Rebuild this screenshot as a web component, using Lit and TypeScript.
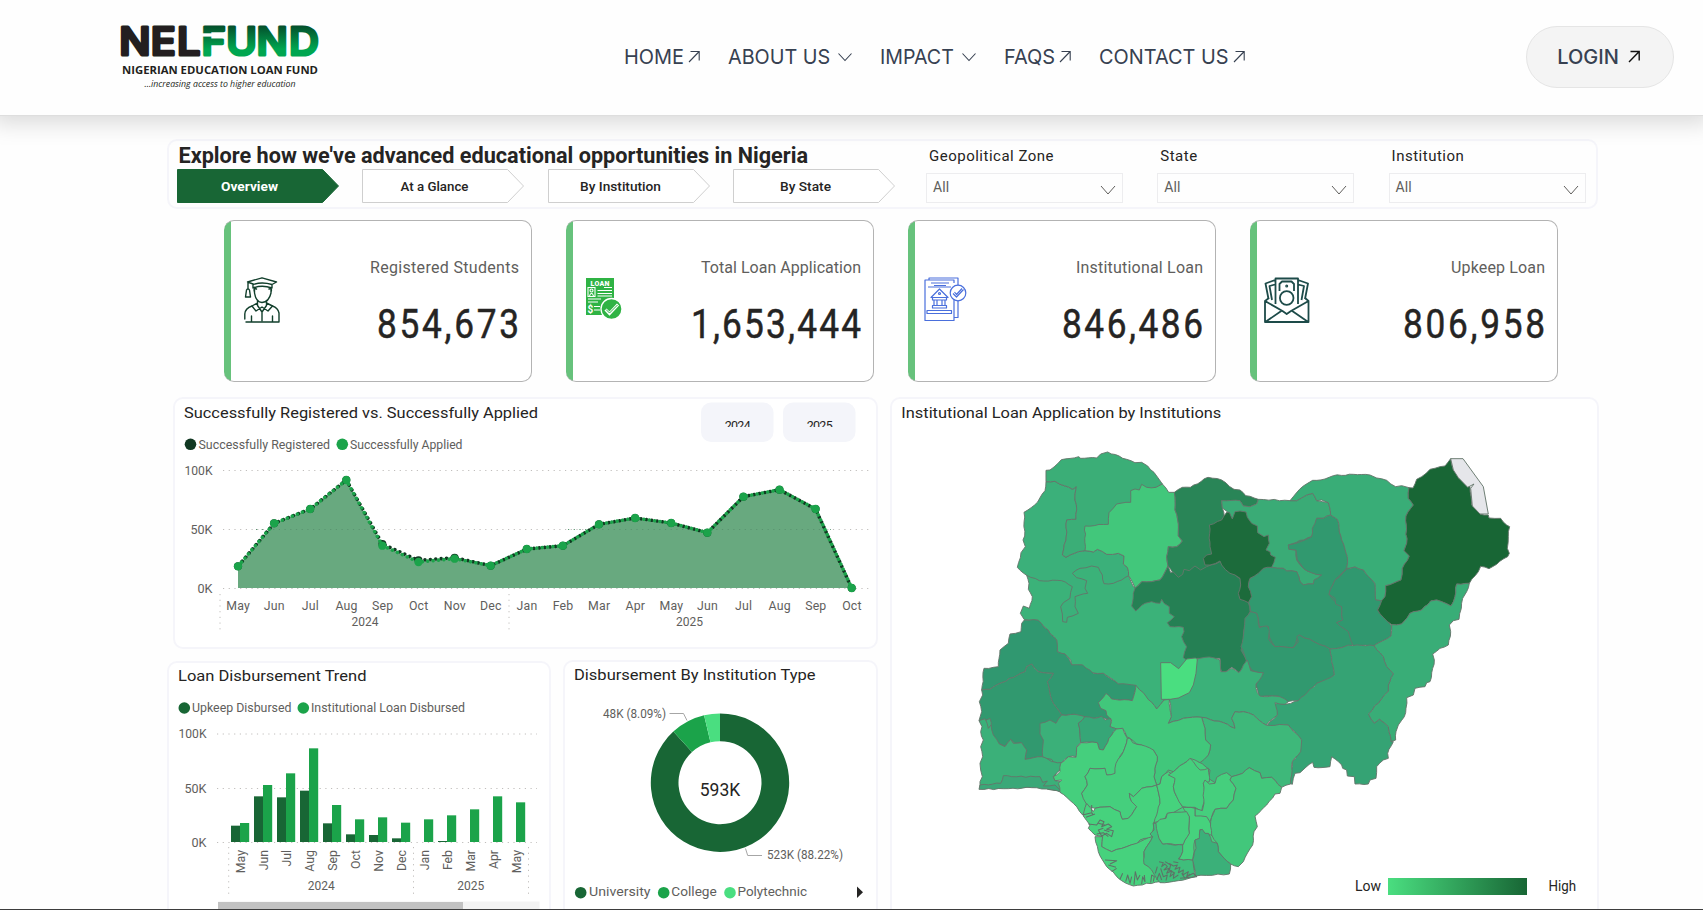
import { LitElement, html, svg, css } from "lit";
import { customElement } from "lit/decorators.js";

type Pt = [number, number];
const MONTHS = ["Jan", "Feb", "Mar", "Apr", "May", "Jun", "Jul", "Aug", "Sep", "Oct", "Nov", "Dec"];

/* Text fitted to a known advance width. */
const label = (x: number, y: number, s: string, size: number, len: number, cls = "soft", anchor = "start") =>
  svg`<text class=${cls} x=${x} y=${y} font-size=${size} textLength=${len} lengthAdjust="spacingAndGlyphs" text-anchor=${anchor}>${s}</text>`;

const arrow = svg`<path d="M1 12 L11.200 1.500 M2.500 1.500 H11.200 V10.500" />`;
const chevron = svg`<path d="M.5 3.500 L7 10.500 L13.500 3.500" />`;

@customElement("site-header")
export class SiteHeader extends LitElement {
  static styles = css`
    :host { display: block; }
    .bar { display: flex; align-items: center; height: 115px; box-sizing: border-box; padding: 0 29px 0 120px;
      background: #fefefe; box-shadow: 0 1px 0 #dedede, 0 0 22px 8px rgba(0, 0, 0, .15); position: relative; z-index: 2; }
    .logo { display: block; width: 201px; height: 72px; overflow: visible; }
    .nav { display: flex; align-items: center; margin-left: 303px; font: 400 20px/24px Inter, sans-serif; color: #374151; height: 24px; margin-bottom: 2px; }
    .item { display: flex; align-items: center; margin-right: 28px; }
    .txt { display: block; white-space: nowrap; overflow: visible; }
    .glyph { display: block; fill: none; stroke: #374151; stroke-width: 1.1; margin-left: 4px; }
    .glyph.down { margin-left: 8px; }
    .login { margin-left: auto; margin-bottom: 2px; display: flex; align-items: center; justify-content: center; gap: 9px; box-sizing: border-box;
      width: 148px; height: 62px; border: 1px solid #e5e5e5; border-radius: 31px; background: #f4f4f4; padding-right: 3px;
      font: 500 20px/24px Inter, sans-serif; color: #374151; }
    .login .glyph { stroke: #111; stroke-width: 1.4; margin: 0; }
  `;
  render() {
    const items: [string, boolean, number][] = [["HOME", false, 60], ["ABOUT US", true, 102.3], ["IMPACT", true, 73.8], ["FAQS", false, 51.1], ["CONTACT US", false, 129.5]];
    return html`<header class="bar">
      <svg class="logo" viewBox="120 22 201 72" font-family="Inter, sans-serif">
        <defs><linearGradient id="g" x1="0" y1="26" x2="0" y2="57" gradientUnits="userSpaceOnUse">
          <stop offset="0" stop-color="#04502c" /><stop offset=".75" stop-color="#00a650" /></linearGradient></defs>
        <g font-size="38.5" font-weight="500" stroke-width="3.2" stroke-linejoin="round" transform="scale(1.075 1)">
          <text x="110.900 140.200 164.600" y="55.400" fill="#231f20" stroke="#231f20">NEL</text>
          <text x="187.500 210.400 238.600 268.900" y="55.400" fill="url(#g)" stroke="url(#g)">FUND</text>
        </g>
        <rect x="201.500" y="33.300" width="10.500" height="3.300" fill="#fefefe" />
        <text x="122" y="74" font-family="Open Sans" font-size="11.3" font-weight="700" fill="#231f20" textLength="196" lengthAdjust="spacingAndGlyphs">NIGERIAN EDUCATION LOAN FUND</text>
        <text x="144.5" y="86.8" font-family="Open Sans" font-size="8.6" font-style="italic" font-weight="500" fill="#231f20" textLength="151" lengthAdjust="spacingAndGlyphs">...increasing access to higher education</text>
      </svg>
      <nav class="nav">${items.map(([t, down, w]) => html`<span class="item">
        <svg class="txt" width=${w} height="24"><text y="19" fill="#374151" textLength=${w} lengthAdjust="spacingAndGlyphs">${t}</text></svg>
        ${down ? html`<svg class="glyph down" width="14" height="14">${chevron}</svg>` : html`<svg class="glyph" width="12" height="13">${arrow}</svg>`}
      </span>`)}</nav>
      <div class="login"><span>LOGIN</span><svg class="glyph" width="12" height="13">${arrow}</svg></div>
    </header>`;
  }
}

@customElement("filter-panel")
export class FilterPanel extends LitElement {
  static styles = css`
    :host { display: flex; box-sizing: border-box; width: 1431px; height: 70px; border: 2px solid #f5f5fa; border-radius: 10px;
      font-family: Roboto, sans-serif; color: #252423; }
    .left { width: 746px; padding-left: 8px; box-sizing: border-box; }
    .title { display: block; height: 28px; overflow: visible; }
    .title text { font: 700 22px Roboto, sans-serif; fill: #252423; }
    .tabs { display: flex; gap: 23.3px; }
    .tab { display: block; width: 162px; height: 35px; }
    .tab path { fill: #fff; stroke: #cfcfcf; }
    .tab.on path { fill: #186635; stroke: #186635; }
    .tab text { font: 500 13px Roboto, sans-serif; fill: #252423; text-anchor: middle; }
    .tab.on text { font-weight: 700; fill: #fff; }
    .filters { display: flex; gap: 34.3px; margin-left: 11px; }
    .filter { width: 197px; }
    .name { height: 32px; padding: 7px 0 0 3px; box-sizing: border-box; font-size: 15px; line-height: 17px; letter-spacing: .5px; }
    .box { display: flex; align-items: center; justify-content: space-between; height: 30px; box-sizing: border-box; border: 1.5px solid #ededef;
      padding: 0 6px 2px; font-size: 14px; letter-spacing: .1px; color: #605e5c; }
    .box svg { fill: none; stroke: #605e5c; margin-top: 6px; }
  `;
  render() {
    const tabs: [string, number][] = [["Overview", 57], ["At a Glance", 68], ["By Institution", 81], ["By State", 51]];
    return html`<div class="left">
      <svg class="title" width="640" height="28"><text x="1.5" y="21.500" textLength="629.500" lengthAdjust="spacingAndGlyphs">Explore how we've advanced educational opportunities in Nigeria</text></svg>
      <div class="tabs">${tabs.map(([t, w], i) => html`<svg class="tab ${i ? "" : "on"}" viewBox="0 0 162 35">
        <path d="M.5 .5 H145.5 L161.5 17 L145.5 33.5 H.5 Z" /><text x="72.5" y="22" textLength=${w} lengthAdjust="spacingAndGlyphs">${t}</text></svg>`)}</div>
    </div>
    <div class="filters">${["Geopolitical Zone", "State", "Institution"].map(t => html`<div class="filter">
      <div class="name">${t}</div><div class="box">All<svg width="16" height="12"><path d="M1 2 L8 10 L15 2" /></svg></div></div>`)}</div>`;
  }
}

const ICONS = {
  student: svg`<g fill="none" stroke="#123f2c" stroke-width="1.4" stroke-linejoin="round" stroke-linecap="round">
    <path d="M3.5 5 L18 .8 L32.5 5 L28 7.5 V11 Q18 7.5 9 11 V7 Z M4 5.5 V12 M9 7.5 Q18 4.5 28 7.5 M2.5 13 L1.5 20 H6.5 L5.5 13 Q4 10.500 2.500 13"/>
    <path d="M10.500 10.500 V16 Q12 25 18 25.500 Q25 25 27 16 V10.500 M10.500 15 Q9 11 12.500 12 M27 15 Q28.500 11 25 12 M13.500 24 V28.500 L18 35 L22.500 28.500 V24 M13.500 26 L8 29 L12 34 L18 30 L24 34 L28.500 29 L22.500 26 M18 35 V44"/>
    <path d="M8 29 Q1 31.500 .8 37 V42 M2 45 H35 V36 Q34 31 28.500 29 M7.500 39 V45 M28.500 39 V45"/></g>`,
  loan: svg`<g><path d="M0 0 H28 V37 H0 Z" fill="#2fb344"/>
    <text x="14" y="7.500" font-family="Roboto, sans-serif" font-weight="900" font-size="7" fill="#fff" text-anchor="middle" textLength="19">LOAN</text>
    <g fill="none" stroke="#fff" stroke-width="1.1"><path d="M2 9.500 H9 V18.500 H2 Z M3.500 18 Q5.500 12.500 7.500 18 M11.500 12.500 H26 M18 9.500 H26 M11.500 15.500 H26 M11.500 18 H26 M2 21 H15 M2 24 H12 M8 28.500 H14 M8 32 H14"/><circle cx="5.500" cy="12.500" r="1.500"/></g>
    <text x="1.500" y="35" font-family="Roboto, sans-serif" font-weight="700" font-size="10" fill="#fff">$</text>
    <circle cx="25.500" cy="31" r="10.500" fill="#2fb344" stroke="#fff" stroke-width="1.300"/>
    <path d="M19.500 31.500 L23.500 35.500 L32 26.500" fill="none" stroke="#fff" stroke-width="3"/><path d="M20 31.500 L23.500 35 L31.500 27" fill="none" stroke="#2fb344" stroke-width="1"/></g>`,
  bank: svg`<g fill="none" stroke="#4a6fdc" stroke-width="1.2" stroke-linejoin="round">
    <path d="M5 3 V1 H34 V8 M30 6 V3 H1 V43.500 H30 V20 M34 22 V40.500 H30 M34 10 V8 M7 6 H25 M10 8.500 H22 M4 10 H27"/>
    <path d="M7 20.500 L15.500 12 L24 20.500 Z M8.500 20.500 H22.500 V23 H8.500 Z M10 23 V28.500 M13 23 V28.500 M18 23 V28.500 M21 23 V28.500 M8.500 28.500 H22.500 V31 H8.500 Z M3 33.500 H27.500 V36.500 H3 Z"/>
    <circle cx="15.500" cy="16.500" r="1"/><circle cx="34" cy="16" r="7.800" fill="#fff"/><path d="M29 16.500 L32.500 20 L39.500 12.500 M30.500 15 L32.500 17.500 L38 11.500"/></g>`,
  envelope: svg`<g fill="none" stroke="#1d4b49" stroke-width="1.8" stroke-linejoin="round">
    <path d="M4.500 22 L1.500 6.500 L11 3 M8 23 L5.500 9 L11 7.500 M41 22 L44 6.500 L34 3 M37.500 23 L40 9 L34 7.500 M11.500 27 V1.500 H34 V27 M15.500 14 V7 L18 4.500 H27.500 L30 7 V14"/>
    <circle cx="22.700" cy="21" r="6.800"/><circle cx="22.700" cy="9" r=".6"/>
    <path d="M5 21 L1 24 V45 H44.500 V24 L41 21 M1 24 L18.500 34 L22.700 37 L27 34 L44.500 24 M18 33.500 L2 44.500 M27.500 33.500 L43.500 44.500"/></g>`,
};

@customElement("stat-card")
export class StatCard extends LitElement {
  static properties = { name: {}, value: {}, icon: {}, w: { type: Number }, vw: { type: Number } };
  declare name: string; declare value: string; declare icon: keyof typeof ICONS; declare w: number; declare vw: number;
  static styles = css`
    :host { display: block; }
    .card { display: flex; align-items: center; box-sizing: border-box; width: 308px; height: 162px; border: 1px solid #b3b3b3; border-left: 0;
      border-radius: 10px; background: linear-gradient(90deg, #67c27c 7px, #fff 7px); padding: 0 12px 0 17px; }
    .icon { display: block; flex: none; overflow: visible; }
    .icon.student { margin: -3px 0 0 3px; } .icon.loan { margin: -1px 0 0 3.5px; } .icon.bank { margin: -2px 0 0 -.5px; } .icon.envelope { margin: -3px 0 0 -3px; }
    .body { display: flex; flex-direction: column; align-items: flex-end; margin-left: auto; gap: 27.5px; padding-bottom: .5px; }
    text { font-family: Roboto, sans-serif; }
    .n { font-size: 16px; fill: #605e5c; }
    .v { font-size: 41px; fill: #252423; stroke: #252423; stroke-width: .5; transform: scaleX(.86); }
    svg { display: block; overflow: visible; }
  `;
  render() {
    return html`<div class="card"><svg class="icon ${this.icon}" width="44" height="46">${ICONS[this.icon]}</svg>
      <div class="body">
        <svg width=${this.w} height="20"><text class="n" y="16" textLength=${this.w} lengthAdjust="spacing">${this.name}</text></svg>
        <svg width=${this.vw + .5} height="40"><text class="v" y="33" textLength=${(this.vw + 1) / .86} lengthAdjust="spacing">${this.value}</text></svg>
      </div></div>`;
  }
}

const chartCss = css`
  :host { display: block; }
  svg { display: block; }
  text { font-family: Roboto, sans-serif; }
  .head { fill: #252423; } .soft { fill: #605e5c; } .mid { text-anchor: middle; } .end { text-anchor: end; }
  .grid { stroke: #c0bebc; stroke-width: 1; stroke-dasharray: 1.2 4.5; fill: none; }
`;

@customElement("area-chart")
export class AreaChart extends LitElement {
  static styles = [chartCss, css`
    .area { fill: #68a97f; }
    .dots { fill: none; stroke-width: 3.6; stroke-linecap: round; stroke-dasharray: .01 5.4; }
    .btn { fill: #f4f5fa; }
    .over { stroke: #5a9470; }
  `];
  render() {
    const ys = [529, 400, 357, 270, 467, 516, 506, 527, 477, 467, 403, 384, 399, 428, 320, 299, 357, 594];
    const dark = [...ys]; dark[4] = 462; dark[5] = 511; dark[6] = 503;
    const pt = (v: number, i: number): Pt => [238 + i * 36.1, 390 + v / 3];
    const a = ys.map(pt), b = dark.map(pt);
    const d = "M" + a.map(p => p.join(" ")).join("L"), e = "M" + b.map(p => p.join(" ")).join("L");
    return html`<svg width="702" height="248" viewBox="175 399 702 248">
      ${label(184, 418, "Successfully Registered vs. Successfully Applied", 15.5, 354, "head")}
      ${[["2024", 701], ["2025", 783]].map(([t, x]) => svg`<rect class="btn" x=${x} y="402.500" width="72.500" height="39.500" rx="10" />
        <svg x=${x} y="415" width="73" height="12" ><text class="head mid" x="36.700" y="15" font-size="12.500" textLength="26">${t}</text></svg>`)}
      <circle cx="190.500" cy="444.300" r="5.800" fill="#113822" />${label(198.5, 449, "Successfully Registered", 12.5, 131.5)}
      <circle cx="342.300" cy="444.300" r="5.800" fill="#1ba34a" />${label(350, 449, "Successfully Applied", 12.5, 112.5)}
      <path class="grid" d="M223 470.500 H869 M223 529.500 H869 M223 588.500 H869 M220 594 V631 M509 594 V631" />
      ${label(212.5, 475, "100K", 12.5, 28, "soft", "end")}${label(212.5, 534, "50K", 12.5, 22, "soft", "end")}${label(212.5, 593, "0K", 12.5, 15, "soft", "end")}
      <path class="area" d="${d}V588H238Z" />
      <path class="grid over" d="M256 529.500 H370 M568 529.500 H831" />
      <path class="dots" stroke="#113822" d=${e} stroke-dashoffset="-1.200" /><g fill="#113822">${b.map(p => svg`<circle cx=${p[0]} cy=${p[1]} r="4" />`)}</g>
      <path class="dots" stroke="#1ba34a" d=${d} /><g fill="#1ba34a">${a.map(p => svg`<circle cx=${p[0]} cy=${p[1]} r="4.200" />`)}</g>
      ${a.map((p, i) => svg`<text class="soft mid" x=${p[0] + .2} y="610" font-size="12.300" letter-spacing=".2">${MONTHS[(i + 4) % 12]}</text>`)}
      ${label(365, 626, "2024", 12.5, 27, "soft", "middle")}${label(689.5, 626, "2025", 12.5, 27, "soft", "middle")}
    </svg>`;
  }
}

@customElement("bar-chart")
export class BarChart extends LitElement {
  static styles = [chartCss];
  render() {
    const up = [512, 424, 427, 407, 505, 538, 540, 550, 562, 558, 562, 562, 562];
    const inst = [504, 390, 355, 280, 450, 493, 487, 503, 493, 481, 463, 424, 442];
    const bar = (v: number, x: number, c: string) => svg`<rect x=${160 + x / 3} y=${655 + v / 3} width="9.200" height=${Math.max(0, (561 - v) / 3)} fill=${c} />`;
    return html`<svg width="380" height="247" viewBox="169 663 380 247">
      ${label(178, 681, "Loan Disbursement Trend", 15.5, 188.5, "head")}
      <circle cx="184.300" cy="708" r="5.800" fill="#186635" />${label(192, 712.3, "Upkeep Disbursed", 12.5, 99.5)}
      <circle cx="303.300" cy="708" r="5.800" fill="#1ba34a" />${label(311, 712.3, "Institutional Loan Disbursed", 12.5, 154)}
      <path class="grid" d="M217 734 H537 M217 788.500 H537 M217 842.500 H537 M228.700 847 V895 M413.500 847 V895 M528.500 847 V895" />
      ${label(206.5, 738.2, "100K", 12.5, 28, "soft", "end")}${label(206.5, 793, "50K", 12.5, 22, "soft", "end")}${label(206.5, 847, "0K", 12.5, 15, "soft", "end")}
      ${up.map((v, i) => bar(v, 213 + 69 * i, "#186635"))}${inst.map((v, i) => bar(v, 240 + 69 * i, "#1ba34a"))}
      ${inst.map((_, i) => svg`<text class="soft end" font-size="12.300" transform="translate(${245.2 + 23 * i} 850) rotate(-90)">${MONTHS[(i + 4) % 12]}</text>`)}
      ${label(321.3, 890, "2024", 12.5, 27, "soft", "middle")}${label(470.7, 890, "2025", 12.5, 27, "soft", "middle")}
      <rect x="218" y="901.500" width="321.500" height="10" fill="#f3f3f3" /><rect x="218" y="902" width="245" height="9" fill="#c2c2c2" />
    </svg>`;
  }
}

@customElement("donut-chart")
export class DonutChart extends LitElement {
  static styles = [chartCss, css`.lead { fill: none; stroke: #a6a6a6; }`];
  render() {
    const cx = 720, cy = 782.7, R = 69.2, r = 41.5;
    const at = (f: number, q: number) => `${cx + q * Math.sin(f * 2 * Math.PI)} ${cy - q * Math.cos(f * 2 * Math.PI)}`;
    const seg = (f: number, t: number, c: string) => { const big = t - f > .5 ? 1 : 0;
      return svg`<path fill=${c} d="M${at(f, R)}A${R} ${R} 0 ${big} 1 ${at(t, R)}L${at(t, r)}A${r} ${r} 0 ${big} 0 ${at(f, r)}Z" />`; };
    return html`<svg width="310" height="248" viewBox="565 662 310 248">
      ${label(574, 680.3, "Disbursement By Institution Type", 15.5, 241.5, "head")}
      ${seg(0, .8822, "#186635")}${seg(.8822, .9631, "#1ba34a")}${seg(.9631, 1, "#4ade80")}
      ${label(720, 796, "593K", 18.5, 40.5, "head", "middle")}
      ${label(603, 718, "48K (8.09%)", 12.3, 63)}${label(767, 859, "523K (88.22%)", 12.3, 76)}
      <path class="lead" d="M669.500 713.500 H683.500 L687 720.500 M745.500 848.500 L747.700 855.500 H762" />
      <circle cx="580.700" cy="892.700" r="5.800" fill="#186635" /><circle cx="663.700" cy="892.700" r="5.800" fill="#1ba34a" /><circle cx="730" cy="892.700" r="5.800" fill="#4ade80" />
      ${label(589, 896.3, "University", 13.3, 61.5)}${label(671.3, 896.3, "College", 13.3, 45.5)}${label(737.5, 896.3, "Polytechnic", 13.3, 69.5)}
      <path d="M857 886.500 V898 L863 892.300 Z" fill="#252423" />
    </svg>`;
  }
}

/* State outlines: frame (n = north-west, e = east, s = south), fill, vertices. */
const STATES: [string, string, string][] = [
  ["e", "#31996f", "-100,300 300,300 330,420 450,520 440,600 260,650 270,760 60,780 -10,720 -100,600"],
  ["s", "#45cf7d", "440,220 960,220 960,350 850,450 850,580 720,630 600,640 450,600 450,540 400,420 340,400"],
  ["s", "#3bb079", "75,130 330,180 380,190 300,300 280,370 80,370"],
  ["n", "#3bb279", "200,436 207,460 205,478 217,500 208,535 190,528 181,550 193,569 235,571 290,630 292,665 315,672 332,690 335,705 365,705 395,728 430,730 475,762 525,768 550,790 590,837 612,810 630,812 720,690 670,590 620,500 520,470 506,437 480,380 320,380"],
  ["n", "#3bb07a", "172,412 183,368 196,350 189,330 194,318 192,247 233,216 255,182 258,155 285,154 300,163 338,178 349,170 345,210 350,240 348,268 320,270 318,330 307,375 318,382 330,375 355,365 375,362 400,366 412,358 440,373 475,370 492,378 490,402 502,412 506,437 485,450 460,460 432,461 427,435 415,412 395,408 360,415 337,430 350,443 380,452 375,475 383,490 345,500 345,530 355,550 322,562 320,577 308,575 307,552 302,530 310,518 330,505 337,470 305,452 238,452 200,436"],
  ["n", "#3bae77", "258,155 258,121 270,120 304,89 356,80 362,85 410,84 422,72 443,66 500,88 525,98 545,97 563,108 590,138 607,162 588,172 512,230 447,283 375,362 355,365 330,375 318,382 307,375 318,330 320,270 348,268 350,240 345,210 349,170 338,178 300,163 285,154"],
  ["n", "#42c77b", "375,288 445,283 447,248 470,222 512,217 512,182 525,177 538,180 545,163 560,172 588,172 607,162 626,187 643,187 645,240 653,270 655,318 667,333 650,350 625,350 620,380 624,408 600,450 575,455 545,455 525,475 506,437 502,412 490,402 492,378 475,370 440,373 412,358 400,366 375,362"],
  ["n", "#298557", "643,187 667,172 691,172 744,142 785,150 822,178 840,180 857,197 895,208 890,222 870,230 850,228 840,212 785,212 787,234 805,300 800,400 850,450 760,450 650,450 624,408 620,380 625,350 650,350 667,333 655,318 653,270 645,240"],
  ["e", "#3aab76", "-55,212 0,212 10,228 30,230 50,222 55,208 150,212 170,212 200,195 218,190 230,212 265,218 272,255 250,265 230,265 215,320 145,345 147,358 168,360 170,390 190,415 215,428 245,435 220,462 190,465 180,455 170,425 140,423 130,415 95,412 0,350 -20,290 -50,290 -38,245 -53,234"],
  ["n", "#258054", "525,475 545,455 575,455 600,450 624,408 632,428 640,426 655,442 668,433 672,418 688,422 705,408 722,420 740,410 780,395 810,420 845,450 840,500 865,517 870,545 860,565 852,600 852,640 843,660 860,690 850,710 837,728 815,712 798,725 785,728 780,685 760,685 740,695 715,685 680,690 670,683 680,650 665,620 672,605 670,592 630,590 622,578 643,560 628,550 628,530 612,520 605,508 600,520 575,515 555,520 527,543 515,528 520,490"],
  ["e", "#31996f", "25,515 25,470 30,445 70,415 95,412 130,415 140,423 170,425 180,455 190,465 220,462 222,450 245,435 215,428 190,415 172,390 168,360 147,358 145,345 160,342 215,320 217,295 230,265 250,265 272,255 292,268 305,330 322,380 320,413 285,450 267,493 285,515 305,530 308,570 290,578 325,600 340,645 305,653 270,657 178,615 160,653 105,650 90,625 85,590 58,590 50,550 32,545"],
  ["e", "#31996f", "32,545 50,550 58,593 82,588 88,602 86,628 105,650 160,653 175,635 170,620 178,615 270,657 275,695 283,735 260,752 230,760 210,785 175,812 140,815 115,798 60,800 48,765 70,730 35,720 20,695 3,650 12,600 15,565"],
  ["e", "#1c6b3b", "-92,285 -55,270 -40,247 -32,247 -23,267 -15,245 0,243 18,246 22,262 35,280 52,288 53,308 72,320 85,315 88,340 78,360 90,365 92,375 106,382 95,412 70,415 55,430 30,445 25,470 35,500 25,518 0,508 -5,490 2,465 0,445 -15,435 -30,430 -55,405 -60,393 -90,405 -105,405 -110,385 -100,375 -85,372 -90,350"],
  ["e", "#39ad77", "150,212 190,168 218,151 255,147 280,137 340,133 390,135 410,144 440,151 467,170 485,167 507,173 505,205 520,225 498,258 500,340 492,362 508,378 487,415 483,450 437,467 435,500 425,512 407,510 404,460 370,420 345,411 320,415 322,380 305,330 292,268 272,255 265,218 245,210 230,212 218,190 200,195 170,212"],
  ["e", "#30986f", "345,411 320,418 300,440 285,450 267,493 285,505 287,522 305,530 308,570 290,578 325,605 340,647 402,647 453,618 455,588 430,562 413,540 425,512 407,510 404,460 370,420"],
  ["e", "#186635", "507,173 519,174 530,148 545,140 570,118 600,110 615,108 632,86 640,120 655,143 690,170 695,225 720,252 745,255 747,264 782,265 800,285 809,290 805,320 802,355 808,370 803,380 747,416 722,409 715,425 688,460 650,462 645,500 633,528 605,515 590,510 572,513 545,540 510,550 485,582 455,584 430,562 413,540 425,512 435,500 437,467 483,450 487,415 508,378 492,362 500,340 498,258 520,225 505,205"],
  ["e", "#e5e6ea", "632,86 669,86 730,170 745,252 720,252 697,228 692,175 702,162 683,172 655,143 640,120"],
  ["e", "#39ad77", "688,460 680,485 668,505 664,535 657,568 640,572 628,585 632,605 625,645 600,655 578,672 583,690 578,715 570,755 560,758 555,770 525,775 520,795 500,803 498,835 493,860 475,885 468,905 467,930 453,935 445,890 418,868 403,880 385,852 445,783 445,765 460,732 440,710 430,680 402,647 453,618 455,584 485,582 510,550 545,540 572,513 590,510 605,515 633,528 645,500 650,462"],
  ["e", "#35a374", "270,657 305,653 325,645 402,647 430,680 440,710 460,732 445,765 445,783 385,852 403,880 418,868 445,890 453,935 460,935 443,970 445,985 430,990 410,1010 408,1045 390,1050 385,1062 345,1062 343,1040 322,1038 320,1020 308,1015 305,1005 275,980 270,1010 222,1012 218,997 180,1028 165,1030 157,1063 150,1060 157,995 180,965 185,930 145,885 80,888 112,855 103,822 140,822 175,812 230,760 283,735 275,695"],
  ["s", "#3bb179", "714,-4 735,-8 760,-7 780,0 782,35 798,35 815,25 837,38 850,15 862,0 872,32 910,38 905,50 888,72 892,98 900,108 960,110 985,125 975,133 945,128 952,165 918,195 880,165 850,155 825,155 815,175 825,205 790,188 725,172 670,175 625,190 634,170 632,135 628,118 655,114 680,60"],
  ["s", "#4ade80", "602,8 632,8 656,26 680,-3 706,-6 712,-2 708,40 700,75 688,98 655,114 630,118 604,118"],
  ["s", "#3eb87a", "725,172 790,188 825,205 815,175 825,155 850,155 880,165 918,195 985,195 1025,240 1022,275 997,305 992,372 965,382 935,352 905,355 900,338 868,323 848,340 815,350 800,340 780,370 765,368 745,355 750,330 715,305 745,285 752,255 737,240 735,205"],
  ["s", "#309870", "328,-2 335,15 368,15 400,40 430,40 475,72 528,76 517,122 455,117 450,150 450,180 420,172 402,175 370,170 345,163 305,165 275,120 262,65 280,40 235,35 215,12 200,20 195,35 125,68 90,88 65,90 72,25 100,22 115,20 120,-30 145,-50 150,-78 183,-85 185,-110 193,-120 235,-119 290,-60 292,-25 315,-18"],
  ["s", "#41c77b", "438,100 455,117 517,122 528,76 550,98 590,147 612,120 628,118 634,170 625,190 670,175 725,172 735,205 737,240 752,255 745,285 720,308 705,300 690,295 640,335 625,330 605,350 600,372 590,375 582,350 592,290 580,270 562,268 545,255 530,252 510,235 500,230 488,205 470,207 450,200 455,180 440,165 438,152 422,145 415,128"],
  ["s", "#31996f", "65,90 90,88 125,68 195,35 200,20 215,12 235,35 280,40 262,65 275,120 305,165 345,163 375,200 245,290 195,298 200,270 182,248 165,250 152,238 135,258 100,240 90,175 75,182 57,182 65,155 58,125 68,105"],
  ["s", "#3bb079", "57,182 75,176 85,205 93,195 100,225 118,252 135,260 152,238 160,250 185,248 200,270 195,298 245,290 255,292 275,305 305,308 300,330 280,350 285,362 305,365 305,397 240,380 60,385 60,365 67,350 62,330 60,310 68,290 62,260 70,240 62,215 66,200"],
  ["s", "#3aa878", "57,388 60,375 122,370 130,347 155,350 240,350 248,367 262,363 250,378 285,375 300,390 305,397 260,387 215,383 145,386"],
  ["s", "#3bb079", "240,222 240,190 270,180 288,190 305,165 345,163 375,170 355,190 362,248 350,260 350,290 325,290 305,308 280,305 275,298 248,290 250,240"],
  ["s", "#36a677", "355,190 375,170 402,175 425,168 435,180 452,175 450,200 470,207 447,235 430,270 418,268 412,248 362,248"],
  ["s", "#45cf7d", "470,207 488,205 502,235 490,275 475,300 465,345 435,345 435,325 390,325 375,350 382,375 365,400 380,430 368,465 340,430 300,397 295,370 305,360 285,362 280,350 300,335 302,310 325,290 348,292 350,262 365,248 412,248 418,268 430,270 447,235"],
  ["s", "#45cf7d", "502,235 510,235 518,248 545,255 580,270 592,290 582,350 590,375 545,385 520,410 508,400 515,425 530,440 505,475 487,478 480,455 450,440 405,445 385,440 378,430 365,400 382,375 375,350 390,325 435,325 440,345 465,340 468,310 490,275"],
  ["s", "#46d27d", "590,375 600,430 590,475 580,490 578,530 540,540 530,552 500,560 455,575 425,560 428,530 405,525 385,505 390,495 370,468 380,430 400,455 405,445 450,440 480,455 487,478 505,475 530,440 515,425 508,400 520,410 545,385"],
  ["s", "#46d27d", "405,530 428,530 425,560 455,575 500,560 530,550 578,530 552,575 555,612 580,630 600,665 520,678 485,662 440,620 415,575"],
  ["s", "#3fbe7b", "590,490 600,540 608,552 668,555 668,575 655,597 700,600 706,650 655,662 600,668 575,630 552,612 552,575 578,530 570,522 582,510 580,490"],
  ["s", "#46d27d", "590,375 600,372 605,350 625,335 650,355 640,380 650,410 668,442 640,458 622,460 615,475 582,488 590,465 600,430"],
  ["s", "#45cf7d", "690,295 700,305 720,330 745,325 748,365 730,370 735,420 725,455 705,442 685,442 668,440 650,410 640,380 645,355 625,345 640,335"],
  ["s", "#45cf7d", "730,370 735,360 748,372 765,370 770,352 800,338 815,350 810,360 828,385 820,420 800,445 765,448 750,485 705,468 705,445 727,452 732,430"],
  ["s", "#46d27d", "668,442 705,445 705,468 740,470 755,500 762,530 735,520 720,508 720,535 705,540 698,600 657,597 668,575 668,555 688,520 688,470"],
  ["s", "#45cf7d", "588,490 600,478 618,475 622,460 680,455 688,470 688,520 670,553 608,552 597,535"],
  ["s", "#42c77b", "815,350 848,340 868,323 900,338 905,355 935,352 965,382 960,400 945,402 920,435 885,468 892,500 882,515 878,555 850,605 835,620 812,612 775,575 772,550 755,525 752,485 765,448 800,445 820,420 828,385 810,360"],
  ["s", "#3bb079", "705,540 718,535 720,510 727,508 735,520 745,520 755,545 772,550 775,575 812,612 808,642 706,648 698,600 708,565"],
];
const OFFSETS: Record<string, string> = { n: "translate(0 0)", e: "translate(840 0)", s: "translate(0 690)" };

/* Breaks long straight borders into small, repeatable wiggles so that both neighbours share them. */
const rough = (pts: string): string => {
  const p = pts.split(" ").map(q => q.split(",").map(Number) as Pt);
  const out: string[] = [];
  p.forEach((a, i) => {
    const b = p[(i + 1) % p.length], dx = b[0] - a[0], dy = b[1] - a[1], len = Math.hypot(dx, dy);
    out.push(a.join(","));
    const n = Math.min(6, Math.floor(len / 12));
    const fwd = a[0] < b[0] || (a[0] === b[0] && a[1] < b[1]);
    for (let k = 1; k < n; k++) {
      const t = k / n, s = fwd ? t : 1 - t;
      const w = Math.sin(s * 23 + (a[0] + b[0]) * .7 + (a[1] + b[1]) * .3) * 1.8 * (fwd ? 1 : -1);
      out.push(`${(a[0] + dx * t - dy / len * w).toFixed(1)},${(a[1] + dy * t + dx / len * w).toFixed(1)}`);
    }
  });
  return out.join(" ");
};

@customElement("state-map")
export class StateMap extends LitElement {
  static styles = [chartCss, css`
    .states { stroke: #64756b; stroke-width: 2.8; stroke-linejoin: round; }
    .creek { fill: none; stroke: #5e7267; stroke-width: 3.2; stroke-linejoin: round; }
  `];
  render() {
    return html`<svg width="705" height="511" viewBox="892 399 705 511">
      <defs><linearGradient id="scale"><stop offset="0" stop-color="#4ade80" /><stop offset="1" stop-color="#186635" /></linearGradient></defs>
      ${label(901.3, 418, "Institutional Loan Application by Institutions", 15.5, 320, "head")}
      <g transform="translate(960 430) scale(.33333)">
        <g class="states">${STATES.map(([f, c, p]) => svg`<polygon transform=${OFFSETS[f]} fill=${c} points=${c === "#e5e6ea" || c === "#4ade80" ? p : rough(p)} />`)}</g>
        <g class="creek" transform=${OFFSETS.s}>
          <path d="M368 465 L395 458 L400 465 M378 472 L405 462 M395 435 V455 M385 492 L410 495 L420 480 L432 485 L425 500 L445 492 L455 500 L440 508 L460 512 L455 530 L440 520 L425 528 L415 510 L430 505 M410 522 L430 518 L445 530 M415 490 L435 495 M432 510 L448 515" />
          <path d="M435 600 L470 602 L450 612 M445 615 L468 622 M455 635 L470 625 M480 658 L488 640 M497 665 L503 645 L510 670 L515 650 M522 674 L526 635 L532 660 L540 645 M545 672 L548 650 L555 665 L553 645 M572 668 L575 645 L583 650 L580 665 M586 640 L592 620" />
          <path d="M597 605 L610 608 L605 620 L615 612 L622 620 L612 630 L628 625 L620 640 L635 632 L630 650 L642 640 L640 655 L655 645 M602 625 L610 650 L622 645 L618 662 M628 610 L640 618 L652 615 L645 628 L660 622 L655 638 L670 630 L668 645 L685 635 L680 650 L700 640 L710 650 L660 655 M640 605 L655 608 M615 605 L632 615 L628 630 L645 640 M590 660 L598 640 L605 660 M665 640 L675 655 L690 642" />
        </g>
      </g>
      <text class="head" x="1355" y="890.500" font-size="14.500" textLength="26" lengthAdjust="spacingAndGlyphs">Low</text>
      <rect x="1388" y="878" width="139" height="17" fill="url(#scale)" />
      <text class="head" x="1548.500" y="890.500" font-size="14.500" textLength="27.500" lengthAdjust="spacingAndGlyphs">High</text>
    </svg>`;
  }
}

@customElement("app-root")
export class AppRoot extends LitElement {
  static styles = css`
    :host { display: block; width: 1703px; height: 910px; overflow: hidden; background: #fefefe; border-bottom: 1px solid #3d3d3d; box-sizing: border-box; }
    .main { padding: 24px 0 0 167px; }
    .cards { display: flex; gap: 34px; margin: 11px 0 0 56.6px; }
    .lower { display: flex; gap: 12px; margin-top: 15px; }
    .left { width: 711px; }
    .row { display: flex; gap: 12px; margin-top: 11px; }
    .panel { box-sizing: border-box; border: 2px solid #f5f5fa; border-radius: 10px; background: #fff; overflow: hidden; }
    .trend { margin-left: 6px; height: 252px; width: 705px; }
    .bars { width: 384px; height: 270px; margin-top: 1px; }
    .donut { width: 315px; height: 270px; }
    .map { width: 709px; height: 530px; }
  `;
  render() {
    const cards: [string, string, string, number, number][] = [
      ["Registered Students", "854,673", "student", 149, 141], ["Total Loan Application", "1,653,444", "loan", 160, 169],
      ["Institutional Loan", "846,486", "bank", 127, 140], ["Upkeep Loan", "806,958", "envelope", 94, 141]];
    return html`<site-header></site-header>
      <main class="main">
        <filter-panel></filter-panel>
        <div class="cards">${cards.map(([n, v, i, w, vw]) => html`<stat-card .name=${n} .value=${v} .icon=${i as any} .w=${w} .vw=${vw}></stat-card>`)}</div>
        <div class="lower">
          <div class="left">
            <section class="panel trend"><area-chart></area-chart></section>
            <div class="row">
              <section class="panel bars"><bar-chart></bar-chart></section>
              <section class="panel donut"><donut-chart></donut-chart></section>
            </div>
          </div>
          <section class="panel map"><state-map></state-map></section>
        </div>
      </main>`;
  }
}
